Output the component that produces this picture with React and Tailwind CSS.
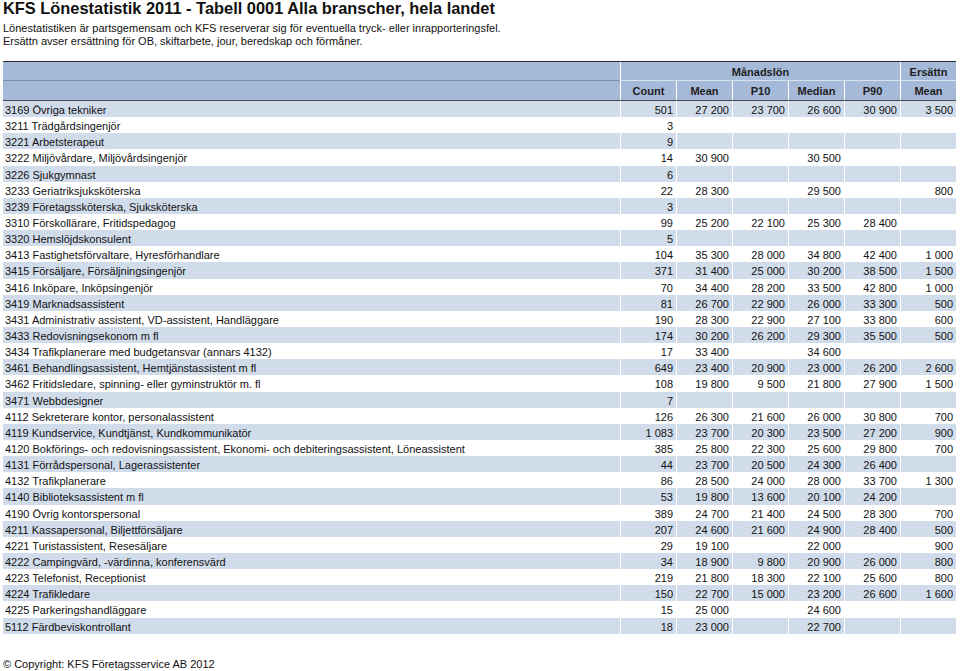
const rows = [
  ['3169 Övriga tekniker', '501', '27 200', '23 700', '26 600', '30 900', '3 500'],
  ['3211 Trädgårdsingenjör', '3', '', '', '', '', ''],
  ['3221 Arbetsterapeut', '9', '', '', '', '', ''],
  ['3222 Miljövårdare, Miljövårdsingenjör', '14', '30 900', '', '30 500', '', ''],
  ['3226 Sjukgymnast', '6', '', '', '', '', ''],
  ['3233 Geriatriksjuksköterska', '22', '28 300', '', '29 500', '', '800'],
  ['3239 Företagssköterska, Sjuksköterska', '3', '', '', '', '', ''],
  ['3310 Förskollärare, Fritidspedagog', '99', '25 200', '22 100', '25 300', '28 400', ''],
  ['3320 Hemslöjdskonsulent', '5', '', '', '', '', ''],
  ['3413 Fastighetsförvaltare, Hyresförhandlare', '104', '35 300', '28 000', '34 800', '42 400', '1 000'],
  ['3415 Försäljare, Försäljningsingenjör', '371', '31 400', '25 000', '30 200', '38 500', '1 500'],
  ['3416 Inköpare, Inköpsingenjör', '70', '34 400', '28 200', '33 500', '42 800', '1 000'],
  ['3419 Marknadsassistent', '81', '26 700', '22 900', '26 000', '33 300', '500'],
  ['3431 Administrativ assistent, VD-assistent, Handläggare', '190', '28 300', '22 900', '27 100', '33 800', '600'],
  ['3433 Redovisningsekonom m fl', '174', '30 200', '26 200', '29 300', '35 500', '500'],
  ['3434 Trafikplanerare med budgetansvar (annars 4132)', '17', '33 400', '', '34 600', '', ''],
  ['3461 Behandlingsassistent, Hemtjänstassistent m fl', '649', '23 400', '20 900', '23 000', '26 200', '2 600'],
  ['3462 Fritidsledare, spinning- eller gyminstruktör m. fl', '108', '19 800', '9 500', '21 800', '27 900', '1 500'],
  ['3471 Webbdesigner', '7', '', '', '', '', ''],
  ['4112 Sekreterare kontor, personalassistent', '126', '26 300', '21 600', '26 000', '30 800', '700'],
  ['4119 Kundservice, Kundtjänst, Kundkommunikatör', '1 083', '23 700', '20 300', '23 500', '27 200', '900'],
  ['4120 Bokförings- och redovisningsassistent, Ekonomi- och debiteringsassistent, Löneassistent', '385', '25 800', '22 300', '25 600', '29 800', '700'],
  ['4131 Förrådspersonal, Lagerassistenter', '44', '23 700', '20 500', '24 300', '26 400', ''],
  ['4132 Trafikplanerare', '86', '28 500', '24 000', '28 000', '33 700', '1 300'],
  ['4140 Biblioteksassistent m fl', '53', '19 800', '13 600', '20 100', '24 200', ''],
  ['4190 Övrig kontorspersonal', '389', '24 700', '21 400', '24 500', '28 300', '700'],
  ['4211 Kassapersonal, Biljettförsäljare', '207', '24 600', '21 600', '24 900', '28 400', '500'],
  ['4221 Turistassistent, Resesäljare', '29', '19 100', '', '22 000', '', '900'],
  ['4222 Campingvärd, -värdinna, konferensvärd', '34', '18 900', '9 800', '20 900', '26 000', '800'],
  ['4223 Telefonist, Receptionist', '219', '21 800', '18 300', '22 100', '25 600', '800'],
  ['4224 Trafikledare', '150', '22 700', '15 000', '23 200', '26 600', '1 600'],
  ['4225 Parkeringshandläggare', '15', '25 000', '', '24 600', '', ''],
  ['5112 Färdbeviskontrollant', '18', '23 000', '', '22 700', '', ''],
];

const subCols = ['Count', 'Mean', 'P10', 'Median', 'P90', 'Mean'];

export default function App() {
  return (
    <div className="bg-white w-[960px] h-[671px] overflow-hidden pl-[3px] text-[#111] font-['Liberation_Sans',Arial,sans-serif]">
      <h1 className="text-[16.4px] font-bold leading-[16px]">
        KFS Lönestatistik 2011 - Tabell 0001 Alla branscher, hela landet
      </h1>
      <div className="mt-[6px] text-[11px] leading-[13px]">
        <p>Lönestatistiken är partsgemensam och KFS reserverar sig för eventuella tryck- eller inrapporteringsfel.</p>
        <p>Ersättn avser ersättning för OB, skiftarbete, jour, beredskap och förmåner.</p>
      </div>

      <div className="mt-[13px] w-[953px] border-t-[1.5px] border-[#2a2a2a]">
        {/* header row 1 */}
        <div className="flex h-[19px] text-[11px] font-bold text-[#1e1e1e]">
          <div className="w-[617px] bg-[#a5b9d8] border-b border-[#7f8ea6]" />
          <div className="ml-px w-[279px] bg-[#a5b9d8] border-b border-[#dbe3ef] flex items-center justify-center pt-[2px]">
            Månadslön
          </div>
          <div className="ml-px w-[55px] bg-[#a5b9d8] border-b border-[#dbe3ef] flex items-center justify-center pt-[2px]">
            Ersättn
          </div>
        </div>
        {/* header row 2 */}
        <div className="flex h-[20px] text-[11px] font-bold text-[#1e1e1e] border-b border-[#4a4a4a]">
          <div className="w-[617px] bg-[#a5b9d8]" />
          {subCols.map((c, i) => (
            <div key={i} className="ml-px w-[55px] bg-[#a5b9d8] flex items-center justify-center pt-[2px]">
              {c}
            </div>
          ))}
        </div>

        {rows.map((r, i) => {
          const bg = i % 2 === 0 ? 'bg-[#d1dceb]' : 'bg-white';
          return (
            <div key={i} className="flex h-[16.15px] text-[11px] leading-[14px]">
              <div className={`w-[617px] pl-[2px] pt-[2px] whitespace-nowrap ${bg}`}>{r[0]}</div>
              {r.slice(1).map((v, j) => (
                <div key={j} className={`ml-px w-[55px] pr-[3px] pt-[2px] text-right whitespace-nowrap ${bg}`}>
                  {v}
                </div>
              ))}
            </div>
          );
        })}
      </div>

      <p className="mt-[24px] text-[11px] leading-[13px]">© Copyright: KFS Företagsservice AB 2012</p>
    </div>
  );
}
